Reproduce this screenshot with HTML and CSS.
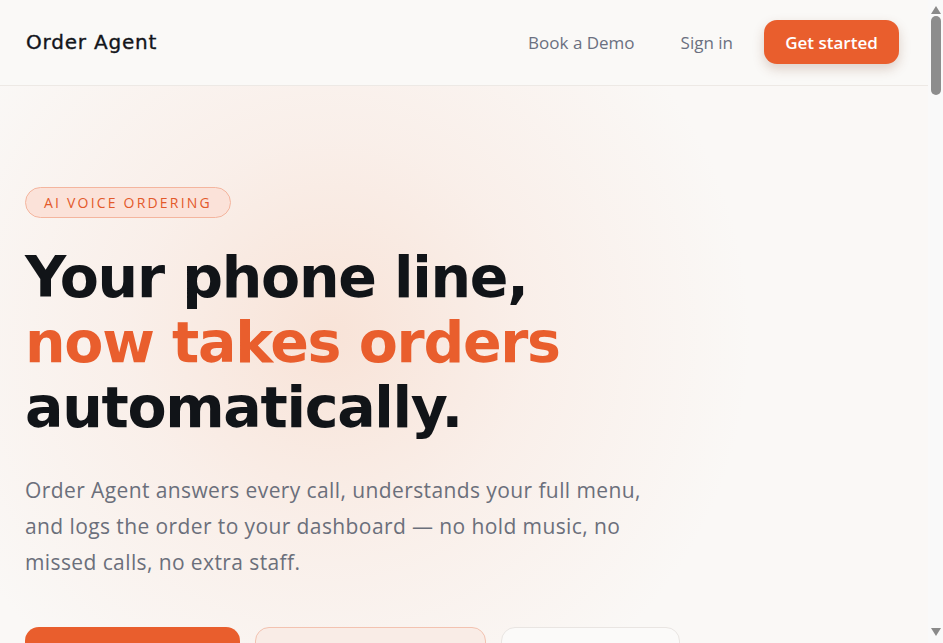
FILE: index.html
```html
<!DOCTYPE html>
<html lang="en">
<head>
<meta charset="utf-8">
<title>Order Agent</title>
<link rel="stylesheet" href="styles.css">
</head>
<body>
<div class="page">
  <header class="nav">
    <a class="logo" href="#">Order Agent</a>
    <nav class="nav-links">
      <a class="nav-link demo" href="#">Book a Demo</a>
      <a class="nav-link" href="#">Sign in</a>
      <a class="nav-cta" href="#">Get started</a>
    </nav>
  </header>
  <main class="hero">
    <div class="hero-inner">
      <span class="badge">AI VOICE ORDERING</span>
      <h1 class="title">Your phone line,<br><span class="accent">now takes orders</span><br>automatically.</h1>
      <p class="lead">Order Agent answers every call, understands your full menu, and logs the order to your dashboard — no hold music, no missed calls, no extra staff.</p>
      <div class="actions">
        <a class="btn btn-primary" href="#">Start free trial</a>
        <a class="btn btn-soft" href="#">Hear a sample call</a>
        <a class="btn btn-ghost" href="#">See pricing</a>
      </div>
    </div>
  </main>
  <section class="rest"></section>
</div>
<div class="scrollbar" aria-hidden="true">
  <span class="sb-arrow sb-up"></span>
  <span class="sb-thumb"></span>
  <span class="sb-arrow sb-down"></span>
</div>
</body>
</html>
```
FILE: styles.css
```css
* { box-sizing: border-box; }
html, body { margin: 0; padding: 0; }
body {
  background: #faf8f6;
  font-family: "Open Sans", "Liberation Sans", sans-serif;
  color: #111418;
}
a { text-decoration: none; }
.page { margin-right: 15px; }

.nav {
  height: 86px;
  display: flex;
  align-items: center;
  justify-content: space-between;
  padding: 0 29px 0 26px;
  background: #faf9f7;
  border-bottom: 1px solid #ede9e5;
}
.logo {
  font-family: "DejaVu Sans", sans-serif;
  font-size: 20px;
  letter-spacing: 0.8px;
  color: #12151a;
  -webkit-text-stroke: 0.35px #12151a;
  margin-top: -1px;
}
.nav-links { display: flex; align-items: center; }
.nav-link {
  font-size: 17px;
  color: #6b7080;
  margin-right: 31px;
}
.nav-link.demo { margin-right: 46px; }
.nav-cta {
  display: flex;
  align-items: center;
  justify-content: center;
  width: 135px;
  height: 44px;
  margin-top: -1px;
  border-radius: 13px;
  background: #e95e2d;
  color: #fff;
  font-size: 17px;
  font-weight: 600;
  box-shadow: 0 5px 12px rgba(120, 60, 30, 0.22);
}

.hero {
  background:
    radial-gradient(circle at 330px 250px, rgba(248, 226, 214, 0.95) 0, rgba(249, 233, 225, 0.6) 200px, rgba(250, 248, 246, 0) 420px),
    #faf8f6;
}
.hero-inner {
  padding: 101px 0 0 25px;
  display: flex;
  flex-direction: column;
  align-items: flex-start;
}
.badge {
  display: inline-flex;
  align-items: center;
  height: 31px;
  padding: 0 18px;
  border-radius: 999px;
  border: 1px solid #f4b59e;
  background: #fbe2d9;
  color: #e3592b;
  font-size: 14px;
  font-weight: 500;
  letter-spacing: 2.2px;
}
.title {
  margin: 27px 0 0;
  font-family: "DejaVu Sans", sans-serif;
  font-weight: 700;
  font-size: 57px;
  line-height: 65px;
  letter-spacing: -1.3px;
  color: #111418;
}
.accent { color: #e95e2d; }
.lead {
  margin: 32px 0 0;
  width: 650px;
  font-size: 21px;
  line-height: 36px;
  letter-spacing: 0.4px;
  color: #6b6f7b;
}
.actions {
  display: flex;
  gap: 15px;
  margin-top: 47px;
}
.btn {
  display: flex;
  align-items: center;
  justify-content: center;
  height: 58px;
  border-radius: 14px;
  font-size: 17px;
  font-weight: 600;
}
.btn-primary { width: 215px; background: #e95e2d; color: #fff; }
.btn-soft { width: 231px; background: #f9ece6; border: 1px solid #f3c2b0; color: #e3592b; }
.btn-ghost { width: 179px; background: #fbfaf9; border: 1px solid #e9e5e2; color: #1b1e24; }

.rest { height: 4400px; }

.scrollbar {
  position: fixed;
  top: 0;
  right: 0;
  width: 15px;
  height: 100vh;
  background: #f9f9f9;
  display: flex;
  flex-direction: column;
  align-items: center;
  justify-content: space-between;
  padding: 6px 0 7px;
}
.sb-arrow {
  width: 0;
  height: 0;
  border-left: 5px solid transparent;
  border-right: 5px solid transparent;
}
.sb-up { border-bottom: 8px solid #8a8a8a; }
.sb-down { border-top: 8px solid #8a8a8a; }
.sb-thumb {
  width: 10px;
  height: 79px;
  margin: 2px 0 auto;
  border-radius: 5px;
  background: #8d8d8d;
}
```
